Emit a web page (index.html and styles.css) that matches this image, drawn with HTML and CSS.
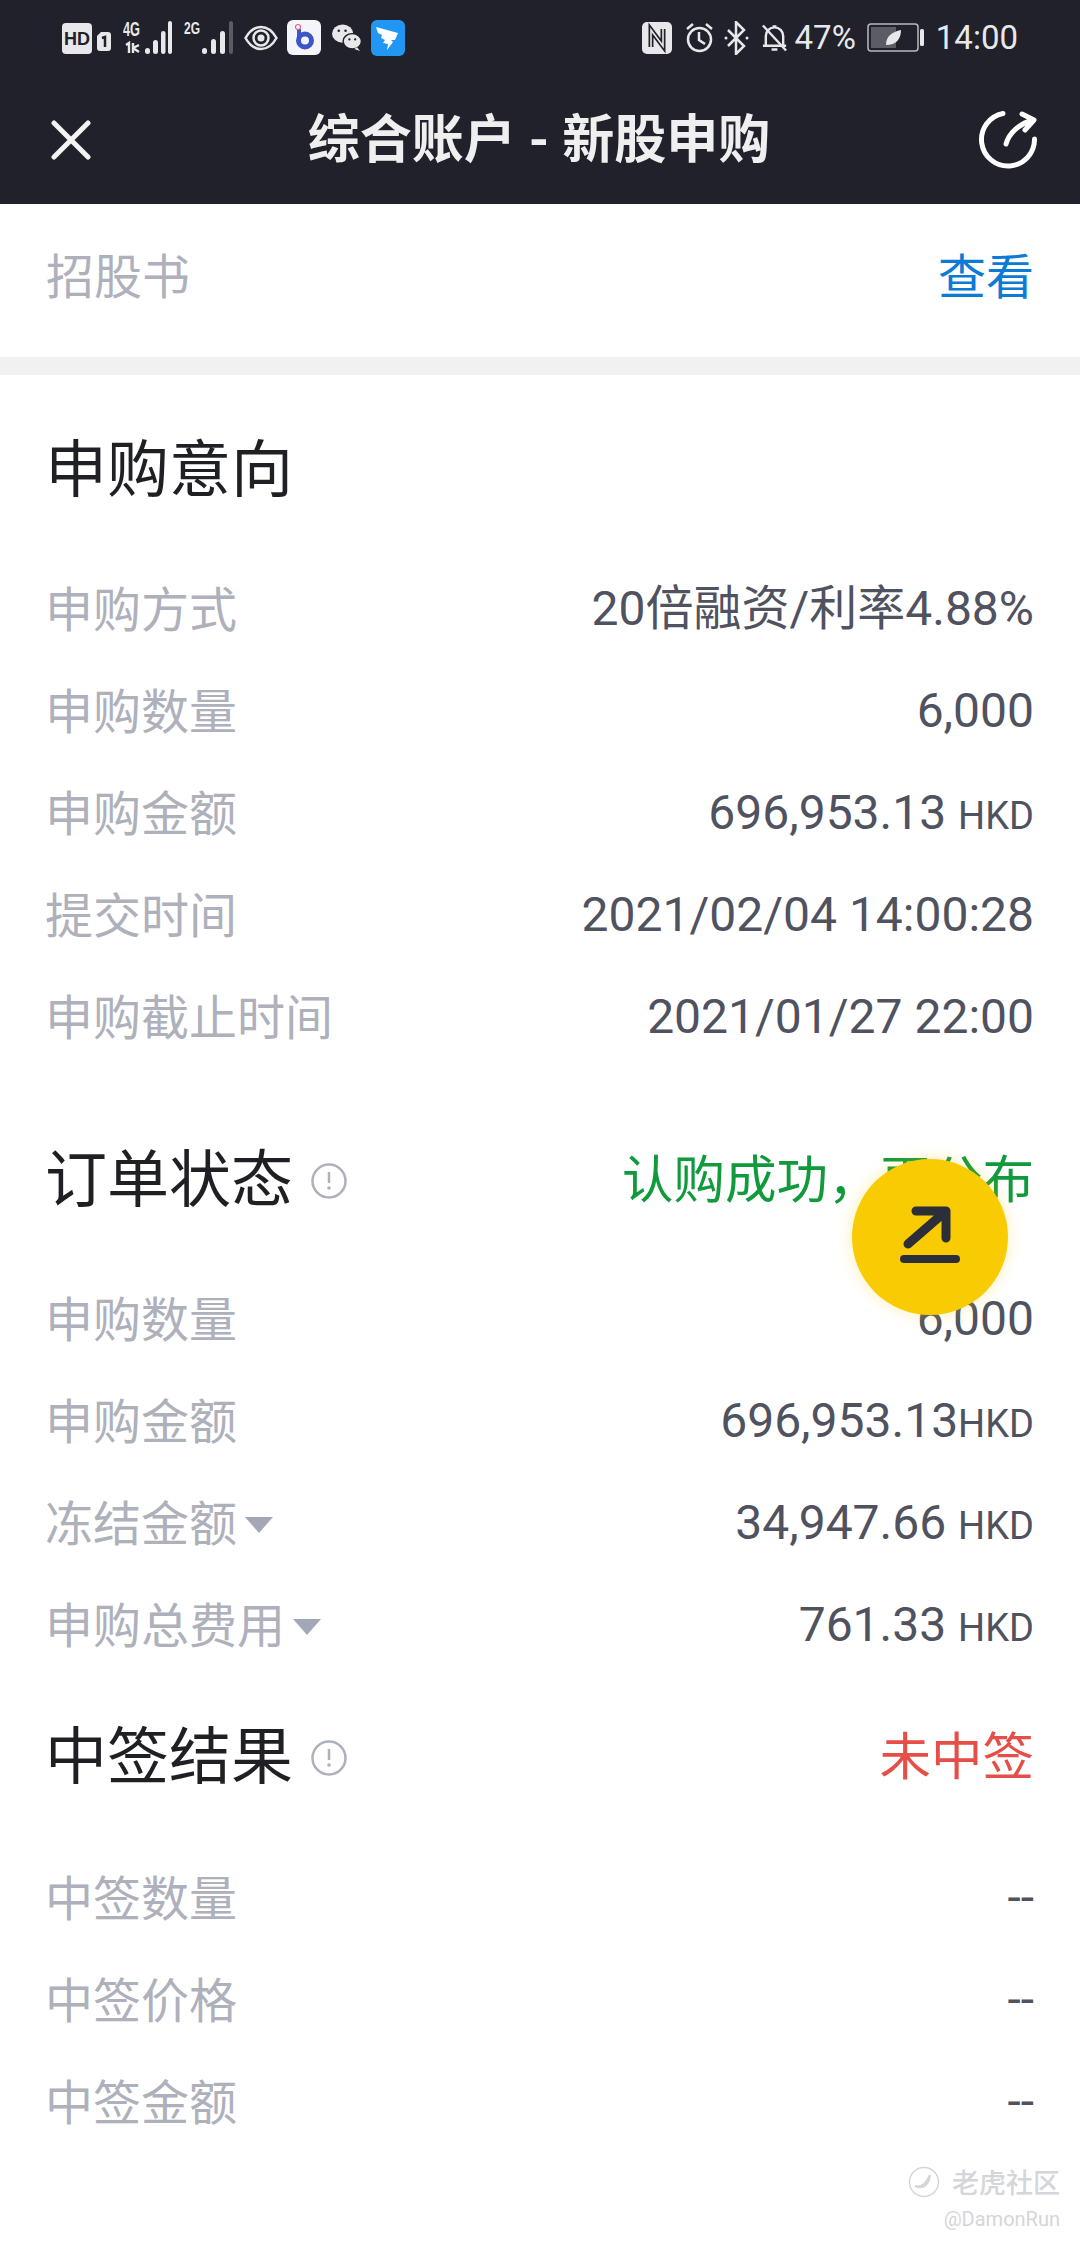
FILE: index.html
```html
<!DOCTYPE html>
<html lang="zh-CN">
<head>
  <meta charset="UTF-8" />
  <meta name="viewport" content="width=device-width, initial-scale=1.0"/>
  <title>综合账户 - 新股申购</title>
  <link rel="stylesheet" href="styles.css">
</head>
<body>

  <!-- Status bar -->
  <div class="status-bar">
    <div class="status-left">
      <svg class="s-hd" width="30" height="31" viewBox="0 0 30 31"><rect width="30" height="31" rx="4" fill="#e8e8ea"/><text x="15" y="22" class="hd-text">HD</text></svg>
      <svg class="s-sim" width="14" height="19" viewBox="0 0 14 19"><path d="M4 0h7a3 3 0 0 1 3 3v13a3 3 0 0 1-3 3H3a3 3 0 0 1-3-3V4z" fill="#e8e8ea"/><path d="M5 6l3-1v10" fill="none" stroke="#20212b" stroke-width="2.500"/></svg>
      <svg class="s-net" width="49" height="39" viewBox="0 -6 49 39">
        <text x="0" y="15" class="net-text" textLength="17" lengthAdjust="spacingAndGlyphs">4G</text>
        <path d="M3 24l3-2v10M10 22v10M10 27l6-3M10 27l6 4" fill="none" stroke="#e8e8ea" stroke-width="2.400"/>
        <g fill="#e8e8ea"><rect x="22" y="27" width="5" height="6" rx="2.500"/><rect x="30" y="19" width="5" height="14" rx="2.500"/><rect x="38" y="10" width="4.500" height="23" rx="2.200"/><rect x="45" y="0" width="4" height="33" rx="2"/></g>
      </svg>
      <svg class="s-net" width="49" height="39" viewBox="0 -6 49 39">
        <text x="0" y="13" class="net-text small" textLength="16" lengthAdjust="spacingAndGlyphs">2G</text>
        <g fill="#e8e8ea"><rect x="18" y="27" width="5" height="6" rx="2.500"/><rect x="27" y="18" width="5" height="15" rx="2.500"/><rect x="36" y="10" width="5" height="23" rx="2.500"/></g>
        <rect x="45" y="0" width="4" height="33" rx="2" fill="#5a5b63"/>
      </svg>
      <svg class="s-eye" width="34" height="26" viewBox="0 0 34 26"><path d="M1.500 13C6 5 11 2 17 2s11 3 15.500 11C28 21 23 24 17 24S6 21 1.500 13z" fill="none" stroke="#e8e8ea" stroke-width="2.500"/><circle cx="17" cy="13" r="7.500" fill="none" stroke="#e8e8ea" stroke-width="2.500"/><circle cx="17" cy="13" r="3.500" fill="#e8e8ea"/></svg>
      <svg class="s-app" width="34" height="35" viewBox="0 0 34 35"><rect width="34" height="35" rx="6" fill="#f4f5fb"/><path d="M12 9v13" stroke="#3e55c8" stroke-width="4"/><circle cx="18" cy="20.500" r="6.500" fill="none" stroke="#3e55c8" stroke-width="5"/><circle cx="11" cy="7" r="2.500" fill="none" stroke="#e0627c" stroke-width="1.200"/></svg>
      <svg class="s-wx" width="31" height="27" viewBox="0 0 32 28"><ellipse cx="12" cy="10" rx="11" ry="9.500" fill="#e8e8ea"/><ellipse cx="22" cy="18" rx="9.500" ry="8" fill="#e8e8ea" stroke="#20212b" stroke-width="1.500"/><path d="M27 24l3 4-6-2z" fill="#e8e8ea"/><g fill="#20212b"><circle cx="8" cy="7" r="1.300"/><circle cx="15" cy="7" r="1.300"/><circle cx="19" cy="16" r="1.200"/><circle cx="25" cy="16" r="1.200"/></g></svg>
      <svg class="s-ding" width="34" height="36" viewBox="0 0 34 36"><rect width="34" height="36" rx="6" fill="#2196f3"/><path d="M5 7l22 6-3 7h-4l2 2-6 8 1-6-5-1 2-3-4-2 1-3-4-2z" fill="#fff"/></svg>
    </div>
    <div class="status-right">
      <svg width="30" height="32" viewBox="0 0 30 32"><rect width="30" height="32" rx="5" fill="#e8e8ea"/><path d="M9 25V8l12 16V7" fill="none" stroke="#20212b" stroke-width="5"/><path d="M9 25V8l12 16V7" fill="none" stroke="#e8e8ea" stroke-width="1.600"/></svg>
      <svg class="s-alarm" width="29" height="31" viewBox="0 0 29 31"><circle cx="14.500" cy="17.500" r="11.500" fill="none" stroke="#e8e8ea" stroke-width="2.500"/><path d="M14 10v8l6 4M2 7l6-5M27 7l-6-5" fill="none" stroke="#e8e8ea" stroke-width="2.500"/></svg>
      <svg class="s-bt" width="25" height="34" viewBox="0 0 25 34"><path d="M4 9l16 16-8 8V1l8 8L4 25" fill="none" stroke="#e8e8ea" stroke-width="2.500"/><circle cx="2" cy="17" r="1.500" fill="#e8e8ea"/><circle cx="23" cy="17" r="1.500" fill="#e8e8ea"/></svg>
      <svg class="s-bell" width="27" height="32" viewBox="0 0 28 32"><path d="M5 24V14c0-5 4-9 9-9s9 4 9 9v10h3H2M11 28h6M12 4h4" fill="none" stroke="#e8e8ea" stroke-width="2.500"/><path d="M2 3l24 26" stroke="#e8e8ea" stroke-width="2.500"/></svg>
      <span class="status-pct">47%</span>
      <svg class="s-batt" width="57" height="29" viewBox="0 0 57 29"><rect x="1" y="1" width="50" height="27" rx="3" fill="none" stroke="#b9b9bd" stroke-width="1.500"/><rect x="4" y="4" width="25" height="21" fill="#5b5c64"/><path d="M19 22c0-9 6-13 15-15 0 9-5 15-15 15z" fill="#e8e8ea"/><rect x="53" y="6" width="4" height="17" rx="1.500" fill="#e8e8ea"/></svg>
      <span class="status-time">14:00</span>
    </div>
  </div>

  <!-- Title bar -->
  <div class="title-bar">
    <svg class="icon-close" width="40" height="40" viewBox="0 0 40 40"><path d="M3 3l34 34M37 3L3 37" stroke="#f3f3f4" stroke-width="5" stroke-linecap="round"/></svg>
    <h1>综合账户 - 新股申购</h1>
    <svg class="icon-share" width="60" height="60" viewBox="0 0 60 60"><path d="M25 3.500A26.500 26.500 0 1 0 56.500 29" fill="none" stroke="#fff" stroke-width="5" stroke-linecap="round"/><path d="M28 34c3-11 13-20 27-24M44 4l12 6-9 10" fill="none" stroke="#fff" stroke-width="5" stroke-linecap="round" stroke-linejoin="round"/></svg>
  </div>

  <div class="prospectus">
    <span>招股书</span>
    <span class="link">查看</span>
  </div>

  <div class="section first">
    <div class="section-head"><h2>申购意向</h2></div>
    <div class="row"><span class="label">申购方式</span><span class="value">20倍融资/利率4.88%</span></div>
    <div class="row"><span class="label">申购数量</span><span class="value">6,000</span></div>
    <div class="row"><span class="label">申购金额</span><span class="value">696,953.13 <small>HKD</small></span></div>
    <div class="row"><span class="label">提交时间</span><span class="value">2021/02/04 14:00:28</span></div>
    <div class="row"><span class="label">申购截止时间</span><span class="value">2021/01/27 22:00</span></div>
  </div>

  <div class="section second">
    <div class="section-head">
      <h2>订单状态</h2>
      <svg class="icon-info" width="36" height="36" viewBox="0 0 36 36"><circle cx="18" cy="18" r="16.500" fill="none" stroke="#aeb1bb" stroke-width="2.500"/><path d="M18 9v11" stroke="#aeb1bb" stroke-width="2.500"/><circle cx="18" cy="25" r="1.800" fill="#aeb1bb"/></svg>
      <span class="status success">认购成功，再公布</span>
    </div>
    <div class="row"><span class="label">申购数量</span><span class="value">6,000</span></div>
    <div class="row"><span class="label">申购金额</span><span class="value">696,953.13<small>HKD</small></span></div>
    <div class="row"><span class="label">冻结金额<i class="caret"></i></span><span class="value">34,947.66 <small>HKD</small></span></div>
    <div class="row"><span class="label">申购总费用<i class="caret"></i></span><span class="value">761.33 <small>HKD</small></span></div>
  </div>

  <div class="section third">
    <div class="section-head">
      <h2>中签结果</h2>
      <svg class="icon-info" width="36" height="36" viewBox="0 0 36 36"><circle cx="18" cy="18" r="16.500" fill="none" stroke="#aeb1bb" stroke-width="2.500"/><path d="M18 9v11" stroke="#aeb1bb" stroke-width="2.500"/><circle cx="18" cy="25" r="1.800" fill="#aeb1bb"/></svg>
      <span class="status fail">未中签</span>
    </div>
    <div class="row"><span class="label">中签数量</span><span class="value">--</span></div>
    <div class="row"><span class="label">中签价格</span><span class="value">--</span></div>
    <div class="row"><span class="label">中签金额</span><span class="value">--</span></div>
  </div>

  <!-- Floating share button -->
  <div class="fab">
    <svg width="62" height="62" viewBox="0 0 62 62"><path d="M9 38L47 5M17 5h30v27" fill="none" stroke="#2c2e3a" stroke-width="9" stroke-linecap="round" stroke-linejoin="round"/><path d="M5 53h52" stroke="#2c2e3a" stroke-width="8" stroke-linecap="round"/></svg>
  </div>

  <!-- Watermark -->
  <div class="watermark">
    <div class="wm-top">
      <svg width="32" height="32" viewBox="0 0 32 32"><circle cx="16" cy="16" r="14.500" fill="none" stroke="#d5d6da" stroke-width="1.500"/><path d="M7 20c6 2 11-2 15-11-1 9-6 15-15 11z" fill="none" stroke="#d5d6da" stroke-width="2"/></svg>
      <span>老虎社区</span>
    </div>
    <div class="wm-user">@DamonRun</div>
  </div>

</body>
</html>
```

FILE: styles.css
```css
:root {
  --dark: #20212b;
  --label: #aeb1bb;
  --value: #50525f;
  --title: #1f2024;
  --blue: #0b7bd6;
  --green: #109a3c;
  --red: #e64f48;
  --yellow: #f9cb03;
}

* {
  box-sizing: border-box;
}

body {
  margin: 0;
  position: relative;
  height: 2244px;
  overflow: hidden;
  background: #fff;
  font-family: Roboto, "Noto Sans CJK SC", sans-serif;
  color: var(--value);
}

svg {
  display: block;
  flex: none;
}

.status-bar {
  height: 75px;
  padding: 0 62px;
  background: var(--dark);
  display: flex;
  justify-content: space-between;
  align-items: center;
}

.status-left,
.status-right {
  display: flex;
  align-items: center;
}

.s-hd { margin-top: 2px; }
.s-sim { margin: 8px 0 0 5px; }
.s-net { margin: -6px 0 0 12px; }
.s-eye { margin-left: 11px; }
.s-app { margin-left: 9px; }
.s-wx { margin-left: 10px; }
.s-ding { margin-left: 9px; }
.s-alarm { margin-left: 13px; }
.s-bt { margin-left: 10px; }
.s-bell { margin-left: 12px; }
.s-batt { margin-left: 11px; }

.hd-text {
  font: 700 18px "Liberation Sans", sans-serif;
  text-anchor: middle;
  fill: #20212b;
}

.net-text {
  font: 700 20px "Liberation Sans", sans-serif;
  fill: #e8e8ea;
}

.net-text.small {
  font-size: 17px;
}

.status-pct,
.status-time {
  font-size: 33px;
  color: #e8e8ea;
  line-height: 1;
}

.status-pct { margin-left: 7px; }
.status-time { margin-left: 12px; }

.title-bar {
  height: 129px;
  padding: 2px 42px 0 40px;
  background: var(--dark);
  display: grid;
  grid-template-columns: 1fr auto 1fr;
  align-items: center;
}

.title-bar h1 {
  margin: 0;
  font-size: 52px;
  font-weight: 700;
  color: #efeff0;
  line-height: 1;
}

.icon-close {
  margin: -2px 0 0 11px;
}

.icon-share {
  justify-self: end;
  margin-top: -2px;
}

.prospectus {
  height: 171px;
  padding: 0 46px 15px;
  border-bottom: 18px solid #f1f1f1;
  display: flex;
  justify-content: space-between;
  align-items: center;
  font-size: 48px;
  color: var(--label);
}

.link {
  color: var(--blue);
}

.section {
  padding: 0 46px 0 45px;
}

.section.first { padding-top: 61px; }
.section.second { padding-top: 81px; }
.section.third { padding-top: 50px; }

.section-head {
  height: 70px;
  margin-bottom: 49px;
  display: flex;
  align-items: center;
}

.section.third .section-head {
  margin-bottom: 51px;
}

.section-head h2 {
  margin: 0;
  font-size: 62px;
  font-weight: 400;
  color: var(--title);
  line-height: 1;
}

.icon-info {
  margin-left: 18px;
}

.status {
  margin-left: auto;
  font-size: 51.500px;
  line-height: 1;
}

.success { color: var(--green); }
.fail { color: var(--red); }

.row {
  height: 102px;
  display: flex;
  justify-content: space-between;
  align-items: center;
}

.label {
  font-size: 48px;
  color: var(--label);
  display: flex;
  align-items: center;
}

.value {
  margin-top: 6px;
  font-size: 48px;
  line-height: 1;
  color: var(--value);
}

.value small {
  font-size: 38px;
}

.caret {
  margin-left: 8px;
  margin-top: 10px;
  border-left: 14px solid transparent;
  border-right: 14px solid transparent;
  border-top: 16px solid #a4a8b6;
}

.fab {
  position: absolute;
  left: 852px;
  top: 1159px;
  width: 156px;
  height: 156px;
  border-radius: 50%;
  background: var(--yellow);
  box-shadow: 0 0 16px rgba(249, 203, 3, 0.3);
  display: flex;
  justify-content: center;
  align-items: center;
}

.watermark {
  position: absolute;
  right: 20px;
  top: 2162px;
  text-align: right;
  color: #d5d6da;
}

.wm-top {
  display: flex;
  align-items: center;
  gap: 12px;
  font-size: 27px;
  font-weight: 500;
}

.wm-user {
  margin-top: 6px;
  font-size: 20px;
}
```
